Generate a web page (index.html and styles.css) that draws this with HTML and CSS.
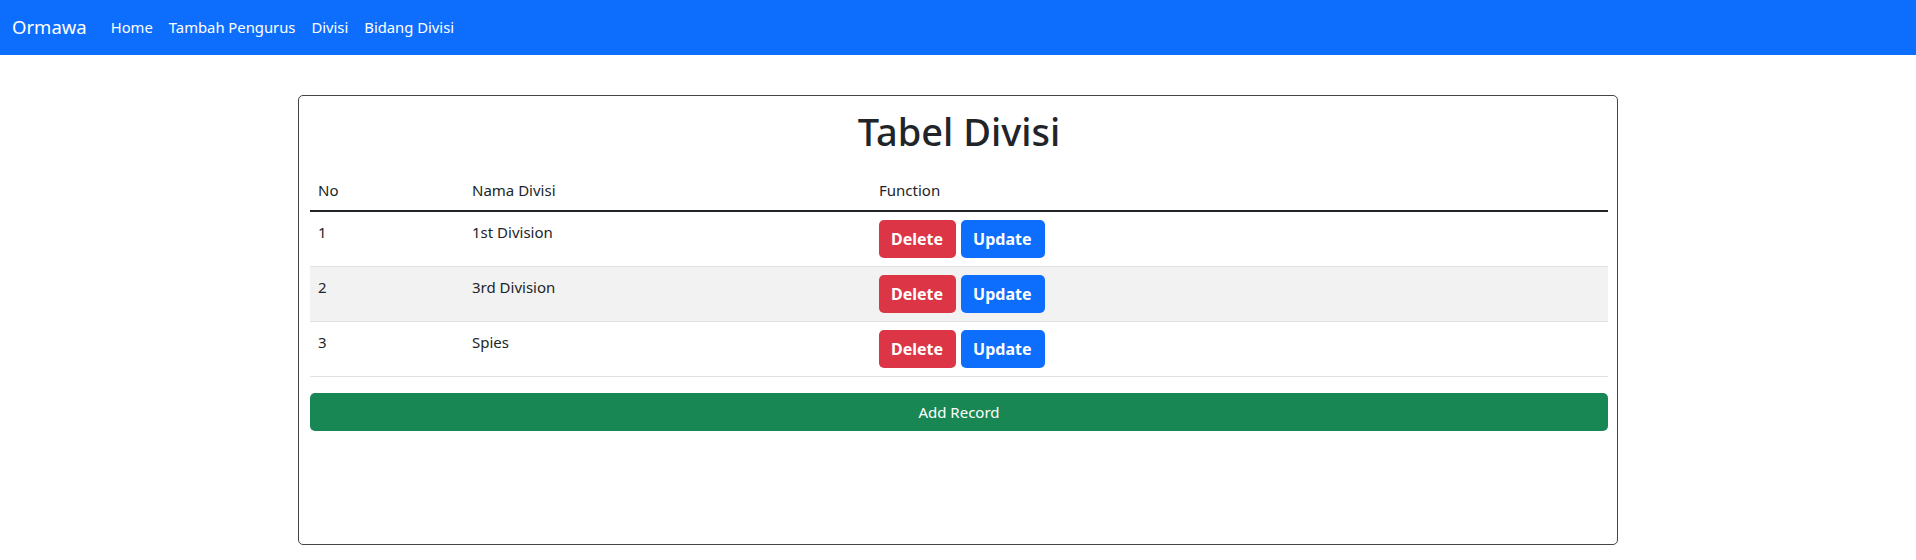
FILE: index.html
```html
<!DOCTYPE html>
<html lang="id">
<head>
<meta charset="utf-8">
<title>Tabel Divisi</title>
<link rel="stylesheet" href="styles.css">
</head>
<body>
<nav class="navbar">
  <a class="brand" href="#">Ormawa</a>
  <a class="nav-link" href="#">Home</a>
  <a class="nav-link" href="#">Tambah Pengurus</a>
  <a class="nav-link" href="#">Divisi</a>
  <a class="nav-link" href="#">Bidang Divisi</a>
</nav>
<main class="container">
  <section class="card">
    <h1 class="title">Tabel Divisi</h1>
    <table class="table">
      <thead>
        <tr>
          <th class="col-no">No</th>
          <th class="col-name">Nama Divisi</th>
          <th>Function</th>
        </tr>
      </thead>
      <tbody>
        <tr>
          <td>1</td>
          <td>1st Division</td>
          <td><div class="actions"><a class="btn btn-danger" href="#">Delete</a><a class="btn btn-primary" href="#">Update</a></div></td>
        </tr>
        <tr class="striped">
          <td>2</td>
          <td>3rd Division</td>
          <td><div class="actions"><a class="btn btn-danger" href="#">Delete</a><a class="btn btn-primary" href="#">Update</a></div></td>
        </tr>
        <tr>
          <td>3</td>
          <td>Spies</td>
          <td><div class="actions"><a class="btn btn-danger" href="#">Delete</a><a class="btn btn-primary" href="#">Update</a></div></td>
        </tr>
      </tbody>
    </table>
    <a class="btn-add" href="#">Add Record</a>
  </section>
</main>
</body>
</html>
```
FILE: styles.css
```css
* { box-sizing: border-box; }
body {
  margin: 0;
  font-family: "Noto Sans", "Open Sans", sans-serif;
  font-size: 15px;
  line-height: 24px;
  color: #212529;
  background: #fff;
}
a { text-decoration: none; }

.navbar {
  height: 55px;
  background: #0d6efd;
  display: flex;
  align-items: center;
  padding: 0 12px 2px;
}
.brand {
  color: #fff;
  font-size: 18.5px;
  line-height: 30px;
  margin-right: 16px;
}
.nav-link {
  color: #fff;
  font-size: 14.8px;
  padding: 0 8px;
}

.container {
  width: 1320px;
  margin: 40px auto 0;
}
.card {
  border: 1px solid #444;
  border-radius: 5px;
  height: 450px;
  padding: 11px 9px 11px 11px;
}
.title {
  margin: 0 0 15px;
  text-align: center;
  font-size: 38px;
  line-height: 48px;
  font-weight: 500;
}

.table {
  width: 100%;
  border-collapse: collapse;
  margin-bottom: 16px;
}
.table th, .table td {
  text-align: left;
  vertical-align: top;
  padding: 8px;
  font-weight: 400;
}
.table thead th {
  border-bottom: 2px solid #212529;
}
.table tbody td {
  border-bottom: 1px solid #dee2e6;
}
.col-no { width: 154px; }
.col-name { width: 407px; }
.striped td { background: #f2f2f2; }

.actions {
  display: flex;
  gap: 5px;
}
.btn {
  display: inline-block;
  padding: 7px 13px 7px 12px;
  border-radius: 5px;
  color: #fff;
  font-weight: 700;
  font-size: 16px;
  line-height: 24px;
}
.btn-danger { background: #dc3545; }
.btn-primary { background: #0d6efd; }

.btn-add {
  display: block;
  height: 38px;
  line-height: 38px;
  text-align: center;
  background: #198754;
  color: #fff;
  border-radius: 5px;
  font-size: 15px;
}
```
